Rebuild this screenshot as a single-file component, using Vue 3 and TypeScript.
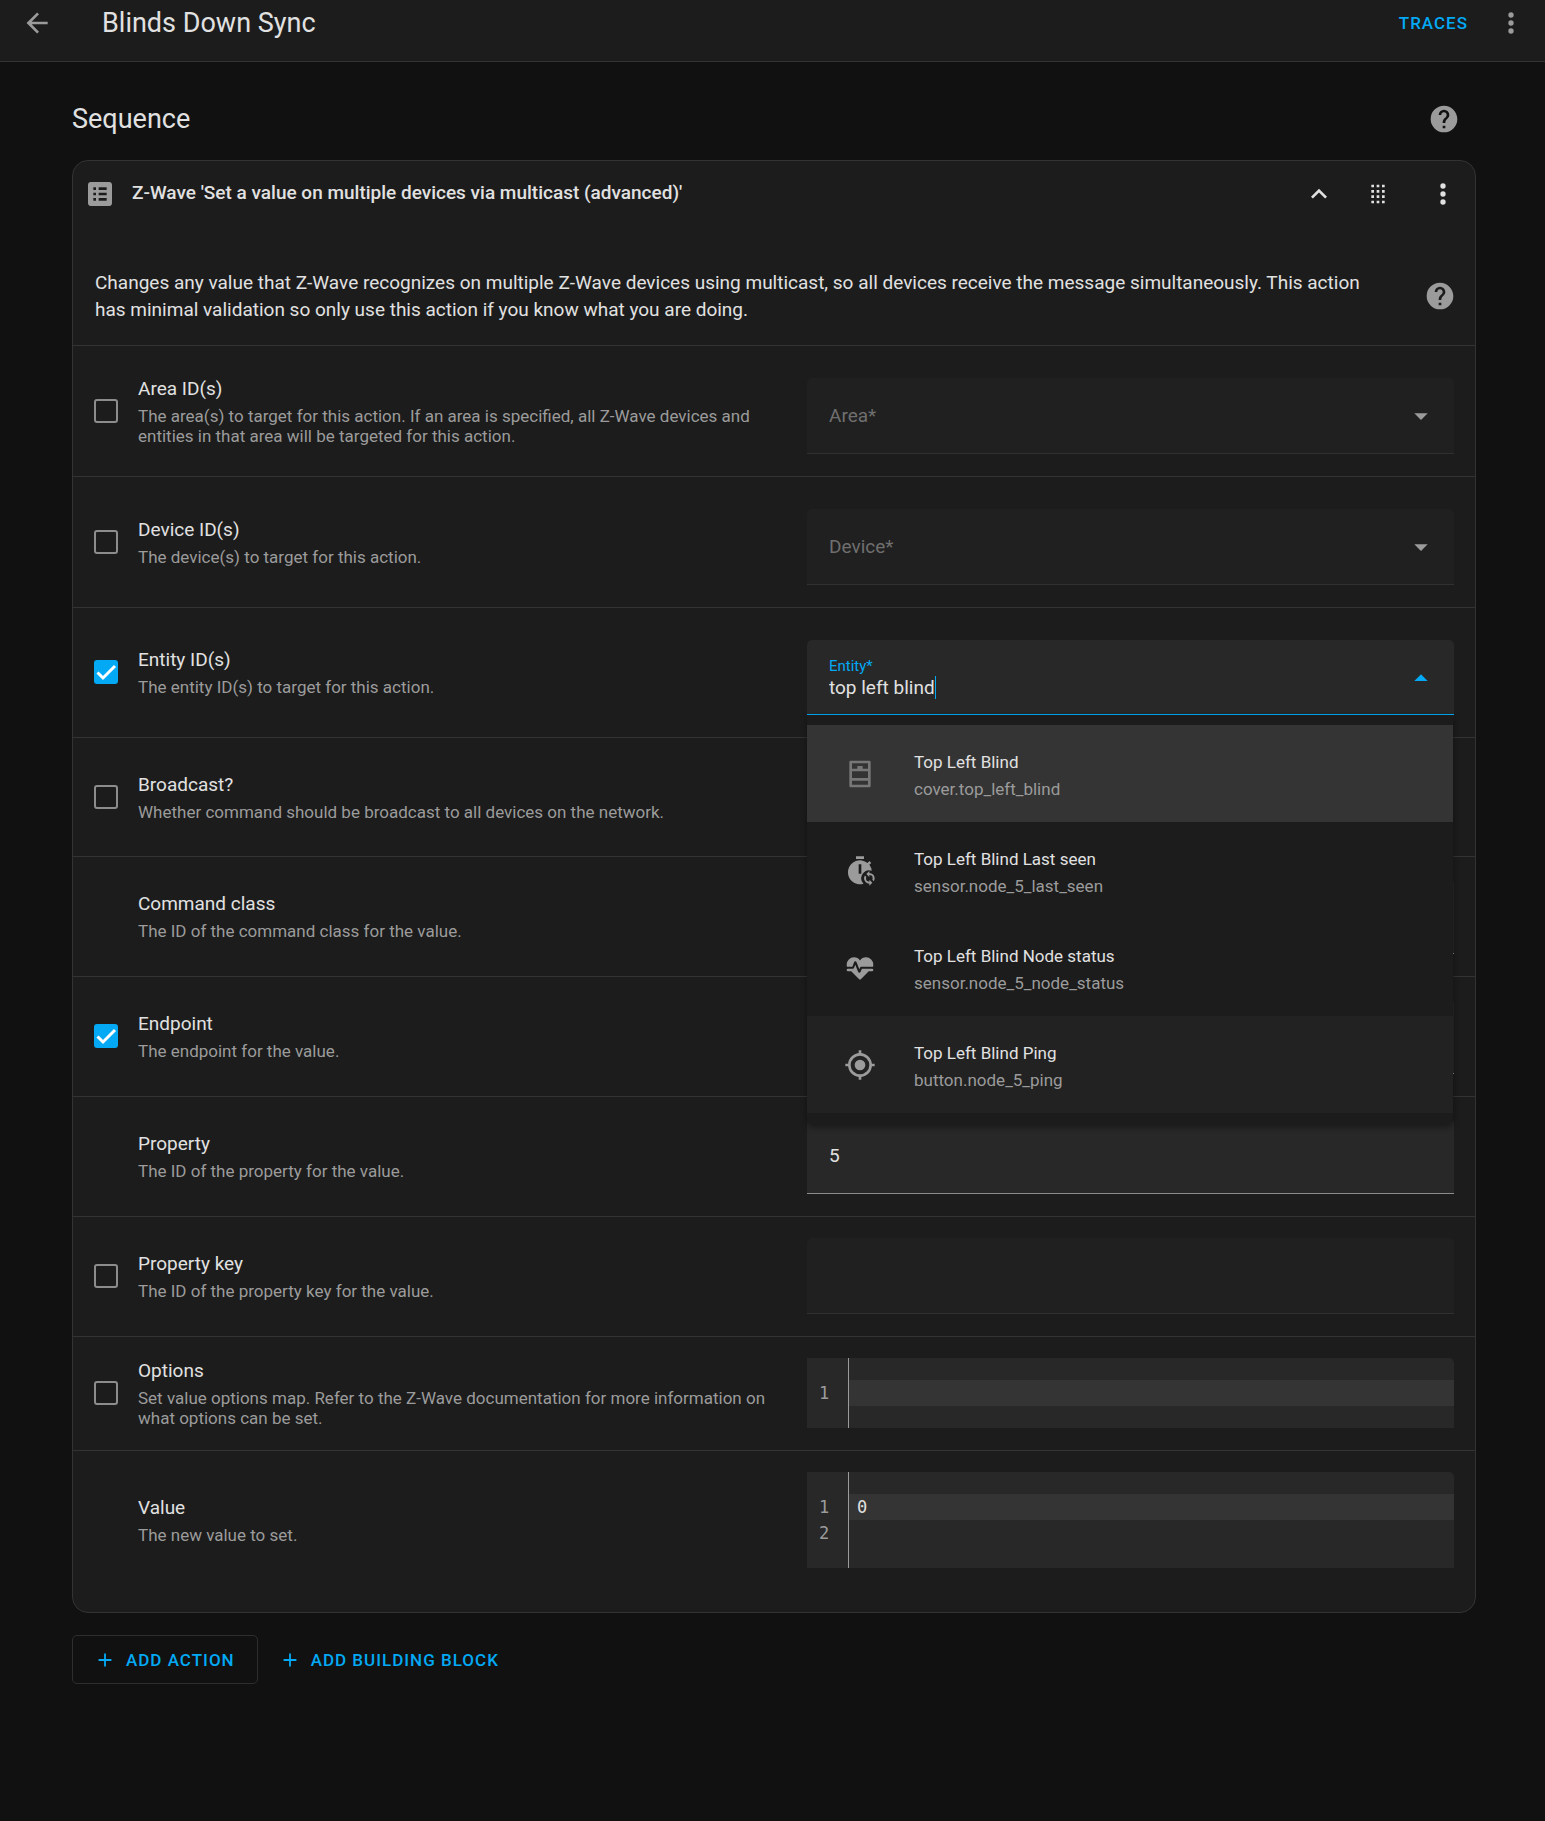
<script setup lang="ts">
import { ref } from 'vue'

type Control = 'select' | 'entity' | 'switch' | 'text' | 'code'

interface Field {
  id: string
  name: string
  description: string
  control: Control
  optional: boolean
  enabled: boolean
  placeholder?: string
  value?: string
  lines?: string[]
}

interface Entity {
  name: string
  id: string
  icon: string
  state?: 'selected' | 'hover'
}

const icons: Record<string, string> = {
  back: 'M20,11V13H8L13.5,18.5L12.08,19.92L4.16,12L12.08,4.08L13.5,5.5L8,11H20Z',
  dots: 'M12,16A2,2 0 0,1 14,18A2,2 0 0,1 12,20A2,2 0 0,1 10,18A2,2 0 0,1 12,16M12,10A2,2 0 0,1 14,12A2,2 0 0,1 12,14A2,2 0 0,1 10,12A2,2 0 0,1 12,10M12,4A2,2 0 0,1 14,6A2,2 0 0,1 12,8A2,2 0 0,1 10,6A2,2 0 0,1 12,4Z',
  help: 'M15.07,11.25L14.17,12.17C13.45,12.89 13,13.5 13,15H11V14.5C11,13.39 11.45,12.39 12.17,11.67L13.41,10.41C13.78,10.05 14,9.55 14,9C14,7.89 13.1,7 12,7A2,2 0 0,0 10,9H8A4,4 0 0,1 12,5A4,4 0 0,1 16,9C16,9.88 15.64,10.67 15.07,11.25M13,19H11V17H13M12,2A10,10 0 0,0 2,12A10,10 0 0,0 12,22A10,10 0 0,0 22,12C22,6.47 17.5,2 12,2Z',
  list: 'M19 3H5C3.9 3 3 3.9 3 5V19C3 20.1 3.9 21 5 21H19C20.1 21 21 20.1 21 19V5C21 3.9 20.1 3 19 3M7 7H9V9H7V7M7 11H9V13H7V11M7 15H9V17H7V15M17 17H11V15H17V17M17 13H11V11H17V13M17 9H11V7H17V9Z',
  collapse: 'M7.41,15.41L12,10.83L16.59,15.41L18,14L12,8L6,14L7.41,15.41Z',
  drag: 'M7,19V17H9V19H7M11,19V17H13V19H11M15,19V17H17V19H15M7,15V13H9V15H7M11,15V13H13V15H11M15,15V13H17V15H15M7,11V9H9V11H7M11,11V9H13V11H11M15,11V9H17V11H15M7,7V5H9V7H7M11,7V5H13V7H11M15,7V5H17V7H15Z',
  down: 'M7,10L12,15L17,10H7Z',
  up: 'M7,15L12,10L17,15H7Z',
  plus: 'M19,13H13V19H11V13H5V11H11V5H13V11H19V13Z',
  cover: 'M5 2H19A1 1 0 0 1 20 3V21A1 1 0 0 1 19 22H5A1 1 0 0 1 4 21V3A1 1 0 0 1 5 2M6 4V8H10V6H14V8H18V4H6M6 10V15H18V10H6M6 17V20H18V17H6Z',
  timer: 'M9 1H15V3H9V1M20.8 11.78A9 9 0 0 0 19.03 7.39L20.45 5.97L19.04 4.56L17.62 6A9 9 0 1 0 14.6 21.6A6 6 0 0 1 20.8 11.78M13 14H11V7H13V14M19 12V13.5A4 4 0 0 1 23 17.5C23 18.32 22.75 19.08 22.33 19.71L21.24 18.62C21.41 18.28 21.5 17.9 21.5 17.5A2.5 2.5 0 0 0 19 15V16.5L16.75 14.25L19 12M19 23V21.5A4 4 0 0 1 15 17.5C15 16.68 15.25 15.92 15.67 15.29L16.76 16.38C16.59 16.72 16.5 17.1 16.5 17.5A2.5 2.5 0 0 0 19 20V18.5L21.25 20.75L19 23Z',
  heart: 'M7.5,4A5.5,5.5 0 0,0 2,9.5C2,10 2.09,10.5 2.22,11H6.3L7.57,7.63C7.87,6.83 9.05,6.75 9.43,7.63L11.5,13L12.09,11.58C12.22,11.25 12.57,11 13,11H21.78C21.91,10.5 22,10 22,9.5A5.5,5.5 0 0,0 16.5,4C14.64,4 13,4.93 12,6.34C11,4.93 9.36,4 7.5,4V4M3,12.5A1,1 0 0,0 2,13.5A1,1 0 0,0 3,14.5H5.44L11,20C12,20.9 12,20.9 13,20L18.56,14.5H21A1,1 0 0,0 22,13.5A1,1 0 0,0 21,12.5H13.4L12.47,14.8C12.07,15.81 10.92,15.67 10.55,14.83L8.5,9.5L7.54,11.83C7.39,12.21 7.05,12.5 6.6,12.5H3Z',
  target: 'M12,8A4,4 0 0,1 16,12A4,4 0 0,1 12,16A4,4 0 0,1 8,12A4,4 0 0,1 12,8M3.05,13H1V11H3.05C3.5,6.83 6.83,3.5 11,3.05V1H13V3.05C17.17,3.5 20.5,6.83 20.95,11H23V13H20.95C20.5,17.17 17.17,20.5 13,20.95V23H11V20.95C6.83,20.5 3.5,17.17 3.05,13M12,5A7,7 0 0,0 5,12A7,7 0 0,0 12,19A7,7 0 0,0 19,12A7,7 0 0,0 12,5Z',
}

const fields = ref<Field[]>([
  { id: 'area', name: 'Area ID(s)', description: 'The area(s) to target for this action. If an area is specified, all Z-Wave devices and entities in that area will be targeted for this action.', control: 'select', optional: true, enabled: false, placeholder: 'Area*' },
  { id: 'device', name: 'Device ID(s)', description: 'The device(s) to target for this action.', control: 'select', optional: true, enabled: false, placeholder: 'Device*' },
  { id: 'entity', name: 'Entity ID(s)', description: 'The entity ID(s) to target for this action.', control: 'entity', optional: true, enabled: true, placeholder: 'Entity*', value: 'top left blind' },
  { id: 'broadcast', name: 'Broadcast?', description: 'Whether command should be broadcast to all devices on the network.', control: 'switch', optional: true, enabled: false },
  { id: 'command-class', name: 'Command class', description: 'The ID of the command class for the value.', control: 'text', optional: false, enabled: true, value: '' },
  { id: 'endpoint', name: 'Endpoint', description: 'The endpoint for the value.', control: 'text', optional: true, enabled: true, value: '' },
  { id: 'property', name: 'Property', description: 'The ID of the property for the value.', control: 'text', optional: false, enabled: true, value: '5' },
  { id: 'property-key', name: 'Property key', description: 'The ID of the property key for the value.', control: 'text', optional: true, enabled: false, value: '' },
  { id: 'options', name: 'Options', description: 'Set value options map. Refer to the Z-Wave documentation for more information on what options can be set.', control: 'code', optional: true, enabled: false, lines: [''] },
  { id: 'value', name: 'Value', description: 'The new value to set.', control: 'code', optional: false, enabled: true, lines: ['0', ''] },
])

const entities: Entity[] = [
  { name: 'Top Left Blind', id: 'cover.top_left_blind', icon: 'cover', state: 'selected' },
  { name: 'Top Left Blind Last seen', id: 'sensor.node_5_last_seen', icon: 'timer' },
  { name: 'Top Left Blind Node status', id: 'sensor.node_5_node_status', icon: 'heart' },
  { name: 'Top Left Blind Ping', id: 'button.node_5_ping', icon: 'target', state: 'hover' },
]
</script>

<template>
  <div class="page">
    <header class="toolbar">
      <button class="icon-button muted" type="button" aria-label="Back">
        <svg class="icon" viewBox="0 0 24 24"><path :d="icons.back" /></svg>
      </button>
      <h1>Blinds Down Sync</h1>
      <button class="text-button" type="button">TRACES</button>
      <button class="icon-button muted" type="button" aria-label="Menu">
        <svg class="icon" viewBox="0 0 24 24"><path :d="icons.dots" /></svg>
      </button>
    </header>

    <main>
      <div class="section-head">
        <h2>Sequence</h2>
        <button class="icon-button muted" type="button" aria-label="Help">
          <svg class="icon" viewBox="0 0 24 24"><path :d="icons.help" /></svg>
        </button>
      </div>

      <section class="card">
        <div class="card-head">
          <svg class="icon muted" viewBox="0 0 24 24"><path :d="icons.list" /></svg>
          <h3>Z-Wave 'Set a value on multiple devices via multicast (advanced)'</h3>
          <div class="card-actions">
            <button class="icon-button" type="button" aria-label="Collapse">
              <svg class="icon" viewBox="0 0 24 24"><path :d="icons.collapse" /></svg>
            </button>
            <button class="icon-button" type="button" aria-label="Move">
              <svg class="icon" viewBox="0 0 24 24"><path :d="icons.drag" /></svg>
            </button>
            <button class="icon-button last" type="button" aria-label="Action menu">
              <svg class="icon" viewBox="0 0 24 24"><path :d="icons.dots" /></svg>
            </button>
          </div>
        </div>

        <div class="intro">
          <p>Changes any value that Z-Wave recognizes on multiple Z-Wave devices using multicast, so all devices receive the message simultaneously. This action has minimal validation so only use this action if you know what you are doing.</p>
          <button class="icon-button muted" type="button" aria-label="Action help">
            <svg class="icon" viewBox="0 0 24 24"><path :d="icons.help" /></svg>
          </button>
        </div>

        <div v-for="field in fields" :key="field.id" class="row">
          <div class="row-label">
            <span class="check">
              <template v-if="field.optional">
                <input :id="`${field.id}-on`" v-model="field.enabled" type="checkbox" />
                <svg v-if="field.enabled" viewBox="0 0 24 24"><path d="M3.5 12.5L9 18L21 6" /></svg>
              </template>
            </span>
            <div class="row-text">
              <label class="row-name" :for="field.optional ? `${field.id}-on` : `${field.id}-value`">{{ field.name }}</label>
              <p>{{ field.description }}</p>
            </div>
          </div>

          <div v-if="field.control === 'select'" class="field offset disabled">
            <select :id="`${field.id}-value`" :aria-label="field.name" disabled>
              <option>{{ field.placeholder }}</option>
            </select>
            <svg class="icon arrow" viewBox="0 0 24 24"><path :d="icons.down" /></svg>
          </div>

          <div v-else-if="field.control === 'entity'" class="field offset focused">
            <div class="floating">
              <label :for="`${field.id}-value`">{{ field.placeholder }}</label>
              <input :id="`${field.id}-value`" v-model="field.value" class="typed" type="text" role="combobox" aria-expanded="true" aria-controls="entity-list" />
            </div>
            <svg class="icon arrow" viewBox="0 0 24 24"><path :d="icons.up" /></svg>
            <ul id="entity-list" class="menu" role="listbox">
              <li v-for="entity in entities" :key="entity.id" :class="entity.state" role="option" :aria-selected="entity.state === 'selected'">
                <svg class="icon" viewBox="0 0 24 24"><path fill-rule="evenodd" :d="icons[entity.icon]" /></svg>
                <div class="entity-text">
                  <span class="entity-name">{{ entity.name }}</span>
                  <span class="entity-id">{{ entity.id }}</span>
                </div>
              </li>
            </ul>
          </div>

          <div v-else-if="field.control === 'switch'" class="blank"></div>

          <div v-else-if="field.control === 'text'" class="field" :class="{ disabled: !field.enabled }">
            <input :id="`${field.id}-value`" v-model="field.value" type="text" :aria-label="field.name" :disabled="!field.enabled" />
          </div>

          <div v-else :id="`${field.id}-value`" class="code" role="textbox" aria-multiline="true" :aria-label="field.name" tabindex="0">
            <div class="gutter">
              <span v-for="(_, n) in field.lines" :key="n">{{ n + 1 }}</span>
            </div>
            <div class="lines">
              <span v-for="(line, n) in field.lines" :key="n" :class="{ active: n === 0 }">{{ line }}</span>
            </div>
          </div>
        </div>
      </section>

      <div class="buttons">
        <button class="text-button outlined" type="button">
          <svg class="plus" viewBox="0 0 24 24"><path :d="icons.plus" /></svg>ADD ACTION
        </button>
        <button class="text-button" type="button">
          <svg class="plus" viewBox="0 0 24 24"><path :d="icons.plus" /></svg>ADD BUILDING BLOCK
        </button>
      </div>
    </main>
  </div>
</template>

<style>
html,
body {
  margin: 0;
  background: #111111;
}
</style>

<style scoped>
.page {
  --primary: #03a9f4;
  --text: #e1e1e1;
  --muted: #9b9b9b;
  --line: #333333;
  --card: #1c1c1c;
  --field: #282828;
  min-height: 100vh;
  background: #111111;
  color: var(--text);
  font-family: Roboto, sans-serif;
  font-size: 19px;
}

.page * {
  box-sizing: border-box;
}

h1,
h2,
h3,
p {
  margin: 0;
  font-weight: 400;
}

button,
input,
select {
  margin: 0;
  padding: 0;
  border: 0;
  background: none;
  color: inherit;
  font: inherit;
}

.icon {
  display: block;
  flex: none;
  width: 32px;
  height: 32px;
  fill: currentColor;
}

.icon-button {
  flex: none;
}

.muted {
  color: var(--muted);
}

.toolbar {
  display: flex;
  align-items: center;
  height: 62px;
  padding: 0 18px 16px 21px;
  border-bottom: 1px solid var(--line);
  background: var(--card);
}

.toolbar h1 {
  flex: 1;
  margin-left: 49px;
  font-size: 27px;
  line-height: 32px;
}

.text-button {
  display: flex;
  align-items: center;
  color: var(--primary);
  font-size: 17px;
  font-weight: 500;
  letter-spacing: 1px;
  white-space: nowrap;
}

.toolbar .text-button {
  margin-right: 27px;
}

main {
  padding: 41px 69px 64px 72px;
}

.section-head {
  display: flex;
  align-items: center;
  justify-content: space-between;
  margin-bottom: 25px;
  padding-right: 16px;
}

h2 {
  font-size: 27px;
  line-height: 32px;
}

.card {
  padding-bottom: 22px;
  border: 1px solid var(--line);
  border-radius: 16px;
  background: var(--card);
}

.card-head {
  display: flex;
  align-items: center;
  height: 65px;
  padding: 0 16px 0 11px;
}

.card-head h3 {
  flex: 1;
  margin-left: 16px;
  padding-bottom: 2px;
  font-size: 19px;
  font-weight: 500;
  line-height: 27px;
}

.card-actions {
  display: flex;
  gap: 27px;
}

.card-actions .last {
  margin-left: 6px;
}

.intro {
  display: flex;
  align-items: center;
  gap: 40px;
  padding: 43px 19px 22px 22px;
}

.intro p {
  flex: 1;
  line-height: 27px;
}

.row {
  display: grid;
  grid-template-columns: minmax(0, 1fr) calc(50% - 33px);
  align-items: center;
  padding: 21px 21px 22px;
  border-top: 1px solid var(--line);
}

.row-label {
  display: flex;
  align-items: center;
  gap: 20px;
  padding-right: 24px;
}

.offset {
  margin-top: 11px;
}

.check {
  display: grid;
  flex: none;
  width: 24px;
  height: 24px;
}

.check input,
.check svg {
  grid-area: 1 / 1;
  width: 24px;
  height: 24px;
}

.check input {
  appearance: none;
  border: 2px solid #8c8c8c;
  border-radius: 3px;
}

.check input:checked {
  border-color: var(--primary);
  background: var(--primary);
}

.check svg {
  fill: none;
  pointer-events: none;
  stroke: #ffffff;
  stroke-width: 3;
}

.row-name {
  display: block;
  margin-bottom: 4px;
  line-height: 26px;
}

.row-text p {
  color: var(--muted);
  font-size: 17px;
  line-height: 20px;
}

.field {
  position: relative;
  display: flex;
  align-items: center;
  height: 76px;
  padding: 0 17px 0 22px;
  border-bottom: 1px solid #8c8c8c;
  border-radius: 5px 5px 0 0;
  background: var(--field);
}

.field.disabled {
  border-bottom-color: #303030;
  background: #202020;
}

.field.focused {
  height: 75px;
  border-bottom-color: var(--primary);
}

.field > input,
.field > select {
  flex: 1;
  min-width: 0;
  height: 100%;
  appearance: none;
  outline: 0;
}

.field > select:disabled {
  color: #6f6f6f;
  opacity: 1;
}

.arrow {
  color: var(--muted);
}

.focused .arrow {
  color: var(--primary);
}

.floating {
  display: flex;
  flex: 1;
  flex-direction: column;
  align-items: flex-start;
}

.floating label {
  color: var(--primary);
  font-size: 15px;
  line-height: 20px;
}

.typed {
  field-sizing: content;
  height: 23px;
  border-right: 1px solid var(--primary);
  outline: 0;
}

.blank {
  height: 75px;
}

.menu {
  position: absolute;
  z-index: 1;
  top: 100%;
  right: 1px;
  left: 0;
  margin: 1px 0 0;
  padding: 10px 0 11px;
  border-radius: 0 0 5px 5px;
  background: var(--card);
  box-shadow: 0 3px 6px rgba(0, 0, 0, 0.4);
  list-style: none;
}

.menu li {
  display: flex;
  align-items: center;
  gap: 38px;
  height: 97px;
  padding: 0 37px;
}

.menu .icon {
  color: var(--muted);
}

.menu .selected {
  background: #343434;
}

.menu .selected .icon {
  color: #777777;
}

.menu .hover {
  background: #222222;
}

.entity-text {
  padding-top: 4px;
}

.entity-name,
.entity-id {
  display: block;
  font-size: 17px;
  line-height: 27px;
}

.entity-id {
  color: var(--muted);
}

.code {
  display: flex;
  overflow: hidden;
  border-radius: 0 5px 0 0;
  background: var(--field);
  font-family: "DejaVu Sans Mono", monospace;
  font-size: 17px;
  line-height: 26px;
}

.gutter,
.lines {
  display: flex;
  flex-direction: column;
  padding: 22px 0;
}

.gutter {
  width: 42px;
  padding-left: 12px;
  border-right: 1px solid var(--muted);
  color: var(--muted);
}

.lines {
  flex: 1;
}

.lines span {
  height: 26px;
  padding-left: 8px;
}

.lines .active {
  background: #343434;
}

.buttons {
  display: flex;
  gap: 21px;
  margin-top: 22px;
}

.buttons .text-button {
  gap: 10px;
  height: 49px;
}

.buttons .outlined {
  padding: 0 22px 0 21px;
  border: 1px solid #2e2e2e;
  border-radius: 5px;
}

.plus {
  width: 22px;
  height: 22px;
  fill: currentColor;
}
</style>
